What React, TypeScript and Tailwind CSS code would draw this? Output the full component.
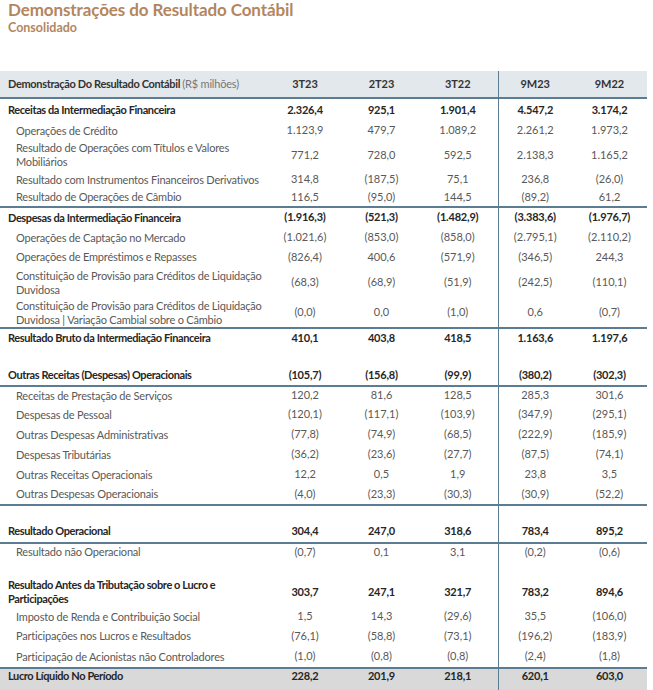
import React from "react";

type Row =
  | { kind: "gap"; h: string }
  | {
      kind: "bold" | "sub";
      label: React.ReactNode;
      values: string[];
      h: string;
      line?: boolean;
    };

const ROWS: Row[] = [
  { kind: "bold", label: "Receitas da Intermediação Financeira", values: ["2.326,4", "925,1", "1.901,4", "4.547,2", "3.174,2"], h: "h-[23px]" },
  { kind: "sub", label: "Operações de Crédito", values: ["1.123,9", "479,7", "1.089,2", "2.261,2", "1.973,2"], h: "h-[19px]" },
  { kind: "sub", label: <>Resultado de Operações com Títulos e Valores<br />Mobiliários</>, values: ["771,2", "728,0", "592,5", "2.138,3", "1.165,2"], h: "h-[30px]" },
  { kind: "sub", label: "Resultado com Instrumentos Financeiros Derivativos", values: ["314,8", "(187,5)", "75,1", "236,8", "(26,0)"], h: "h-[19px]" },
  { kind: "sub", label: "Resultado de Operações de Câmbio", values: ["116,5", "(95,0)", "144,5", "(89,2)", "61,2"], h: "h-[17px]", line: true },
  { kind: "bold", label: "Despesas da Intermediação Financeira", values: ["(1.916,3)", "(521,3)", "(1.482,9)", "(3.383,6)", "(1.976,7)"], h: "h-[21px]" },
  { kind: "sub", label: "Operações de Captação no Mercado", values: ["(1.021,6)", "(853,0)", "(858,0)", "(2.795,1)", "(2.110,2)"], h: "h-[20px]" },
  { kind: "sub", label: "Operações de Empréstimos e Repasses", values: ["(826,4)", "400,6", "(571,9)", "(346,5)", "244,3"], h: "h-[19px]" },
  { kind: "sub", label: <>Constituição de Provisão para Créditos de Liquidação<br />Duvidosa</>, values: ["(68,3)", "(68,9)", "(51,9)", "(242,5)", "(110,1)"], h: "h-[32px]" },
  { kind: "sub", label: <>Constituição de Provisão para Créditos de Liquidação<br />Duvidosa | Variação Cambial sobre o Câmbio</>, values: ["(0,0)", "0,0", "(1,0)", "0,6", "(0,7)"], h: "h-[28px]", line: true },
  { kind: "bold", label: "Resultado Bruto da Intermediação Financeira", values: ["410,1", "403,8", "418,5", "1.163,6", "1.197,6"], h: "h-[20px]" },
  { kind: "gap", h: "h-[18px]" },
  { kind: "bold", label: "Outras Receitas (Despesas) Operacionais", values: ["(105,7)", "(156,8)", "(99,9)", "(380,2)", "(302,3)"], h: "h-[20px]", line: true },
  { kind: "sub", label: "Receitas de Prestação de Serviços", values: ["120,2", "81,6", "128,5", "285,3", "301,6"], h: "h-[19px]" },
  { kind: "sub", label: "Despesas de Pessoal", values: ["(120,1)", "(117,1)", "(103,9)", "(347,9)", "(295,1)"], h: "h-[20px]" },
  { kind: "sub", label: "Outras Despesas Administrativas", values: ["(77,8)", "(74,9)", "(68,5)", "(222,9)", "(185,9)"], h: "h-[20px]" },
  { kind: "sub", label: "Despesas Tributárias", values: ["(36,2)", "(23,6)", "(27,7)", "(87,5)", "(74,1)"], h: "h-[20px]" },
  { kind: "sub", label: "Outras Receitas Operacionais", values: ["12,2", "0,5", "1,9", "23,8", "3,5"], h: "h-[20px]" },
  { kind: "sub", label: "Outras Despesas Operacionais", values: ["(4,0)", "(23,3)", "(30,3)", "(30,9)", "(52,2)"], h: "h-[20px]", line: true },
  { kind: "gap", h: "h-[16px]" },
  { kind: "bold", label: "Resultado Operacional", values: ["304,4", "247,0", "318,6", "783,4", "895,2"], h: "h-[22px]", line: true },
  { kind: "sub", label: "Resultado não Operacional", values: ["(0,7)", "0,1", "3,1", "(0,2)", "(0,6)"], h: "h-[17px]" },
  { kind: "gap", h: "h-[17px]" },
  { kind: "bold", label: <>Resultado Antes da Tributação sobre o Lucro e<br />Participações</>, values: ["303,7", "247,1", "321,7", "783,2", "894,6"], h: "h-[30px]" },
  { kind: "sub", label: "Imposto de Renda e Contribuição Social", values: ["1,5", "14,3", "(29,6)", "35,5", "(106,0)"], h: "h-[19px]" },
  { kind: "sub", label: "Participações nos Lucros e Resultados", values: ["(76,1)", "(58,8)", "(73,1)", "(196,2)", "(183,9)"], h: "h-[20px]" },
  { kind: "sub", label: "Participação de Acionistas não Controladores", values: ["(1,0)", "(0,8)", "(0,8)", "(2,4)", "(1,8)"], h: "h-[22px]", line: true },
];

const COLS = ["3T23", "2T23", "3T22", "9M23", "9M22"];

export default function App() {
  return (
    <div className="w-[653px] h-[690px] overflow-hidden bg-white font-['Lato','Liberation_Sans',sans-serif] text-[11px] text-[#595959]">
      <div className="px-2">
        <h1 className="text-[17px] leading-[19px] font-bold text-[#b3865f] tracking-[-0.1px]">Demonstrações do Resultado Contábil</h1>
        <p className="mt-[2px] text-[12.5px] leading-[14px] font-bold text-[#b3865f]">Consolidado</p>
      </div>

      <table className="mt-[36px] w-[647px] border-collapse table-fixed">
        <colgroup>
          <col className="w-[265px]" />
          <col className="w-[80px]" />
          <col className="w-[73px]" />
          <col className="w-[80px]" />
          <col className="w-[74px]" />
          <col className="w-[75px]" />
        </colgroup>
        <thead>
          <tr className="h-[27px] bg-[#e3e8ec] border-b-2 border-[#5b7c92]">
            <th className="pl-2 text-left font-bold text-[#333] whitespace-nowrap tracking-[-0.35px]">
              Demonstração Do Resultado Contábil <span className="font-normal text-[#777] tracking-[-0.2px]">(R$ milhões)</span>
            </th>
            {COLS.map((c, i) => (
              <th key={c} className={`text-center font-bold text-[#333] ${i === 3 ? "border-l border-[#5b7c92]" : ""}`}>
                {c}
              </th>
            ))}
          </tr>
        </thead>
        <tbody>
          {ROWS.map((r, idx) => {
            if (r.kind === "gap") {
              return (
                <tr key={idx} className={r.h}>
                  <td colSpan={4} />
                  <td className="border-l border-[#5b7c92]" colSpan={2} />
                </tr>
              );
            }
            const bold = r.kind === "bold";
            return (
              <tr key={idx} className={`${r.h} ${r.line ? "border-b-2 border-[#5b7c92]" : ""}`}>
                <td
                  className={`whitespace-nowrap leading-[14px] ${
                    bold ? "pl-2 font-bold text-[#262626] tracking-[-0.4px]" : "pl-4 text-[#595959] tracking-[-0.2px]"
                  }`}
                >
                  {r.label}
                </td>
                {r.values.map((v, i) => (
                  <td
                    key={i}
                    className={`text-center ${bold ? "font-bold text-[#262626] tracking-[-0.2px]" : "text-[#595959]"} ${
                      i === 3 ? "border-l border-[#5b7c92]" : ""
                    }`}
                  >
                    {v}
                  </td>
                ))}
              </tr>
            );
          })}
          <tr className="h-[22px] bg-[#d9d9d9]">
            <td className="pl-2 align-top leading-[14px] font-bold text-[#262626] tracking-[-0.4px]">Lucro Líquido No Período</td>
            {["228,2", "201,9", "218,1", "620,1", "603,0"].map((v, i) => (
              <td
                key={i}
                className={`align-top leading-[14px] text-center font-bold text-[#262626] tracking-[-0.2px] ${
                  i === 3 ? "border-l border-[#5b7c92]" : ""
                }`}
              >
                {v}
              </td>
            ))}
          </tr>
        </tbody>
      </table>
    </div>
  );
}
